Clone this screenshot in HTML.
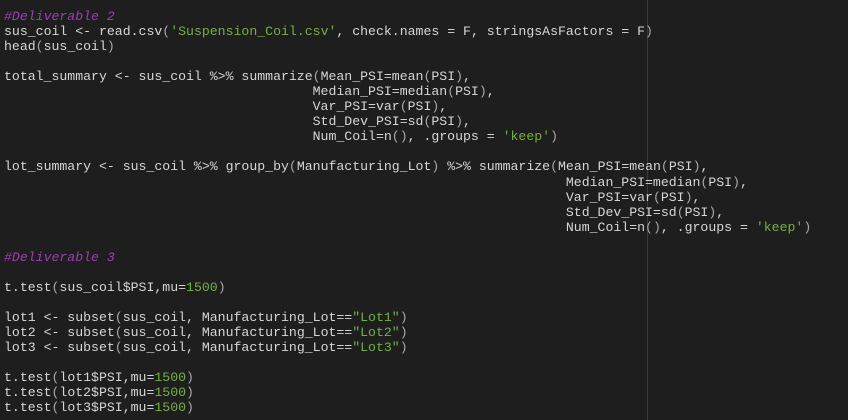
<!DOCTYPE html>
<html><head><style>
html,body{margin:0;padding:0;background:#1e1e1e;}
body{width:848px;height:420px;overflow:hidden;position:relative;}
pre{margin:0;position:absolute;left:4px;top:9px;font-family:"Liberation Mono",monospace;font-size:13.2px;line-height:15.04px;color:#d6d6d6;}
.c{color:#9b3fb5;font-style:italic}
.s{color:#74b043}
.p{color:#a8a8a8}
.vl{position:absolute;left:647px;top:0;width:1px;height:420px;background:#3a3a3a;}
</style></head><body>
<div class="vl"></div>
<pre><span class="c">#Deliverable 2</span>
sus_coil &lt;- read.csv<span class="p">(</span><span class="s">'Suspension_Coil.csv'</span>, check.names = F, stringsAsFactors = F<span class="p">)</span>
head<span class="p">(</span>sus_coil<span class="p">)</span>

total_summary &lt;- sus_coil %&gt;% summarize<span class="p">(</span>Mean_PSI=mean<span class="p">(</span>PSI<span class="p">)</span>,
                                       Median_PSI=median<span class="p">(</span>PSI<span class="p">)</span>,
                                       Var_PSI=var<span class="p">(</span>PSI<span class="p">)</span>,
                                       Std_Dev_PSI=sd<span class="p">(</span>PSI<span class="p">)</span>,
                                       Num_Coil=n<span class="p">()</span>, .groups = <span class="s">'keep'</span><span class="p">)</span>

lot_summary &lt;- sus_coil %&gt;% group_by<span class="p">(</span>Manufacturing_Lot<span class="p">)</span> %&gt;% summarize<span class="p">(</span>Mean_PSI=mean<span class="p">(</span>PSI<span class="p">)</span>,
                                                                       Median_PSI=median<span class="p">(</span>PSI<span class="p">)</span>,
                                                                       Var_PSI=var<span class="p">(</span>PSI<span class="p">)</span>,
                                                                       Std_Dev_PSI=sd<span class="p">(</span>PSI<span class="p">)</span>,
                                                                       Num_Coil=n<span class="p">()</span>, .groups = <span class="s">'keep'</span><span class="p">)</span>

<span class="c">#Deliverable 3</span>

t.test<span class="p">(</span>sus_coil$PSI,mu=<span class="s">1500</span><span class="p">)</span>

lot1 &lt;- subset<span class="p">(</span>sus_coil, Manufacturing_Lot==<span class="s">"Lot1"</span><span class="p">)</span>
lot2 &lt;- subset<span class="p">(</span>sus_coil, Manufacturing_Lot==<span class="s">"Lot2"</span><span class="p">)</span>
lot3 &lt;- subset<span class="p">(</span>sus_coil, Manufacturing_Lot==<span class="s">"Lot3"</span><span class="p">)</span>

t.test<span class="p">(</span>lot1$PSI,mu=<span class="s">1500</span><span class="p">)</span>
t.test<span class="p">(</span>lot2$PSI,mu=<span class="s">1500</span><span class="p">)</span>
t.test<span class="p">(</span>lot3$PSI,mu=<span class="s">1500</span><span class="p">)</span></pre>
</body></html>
